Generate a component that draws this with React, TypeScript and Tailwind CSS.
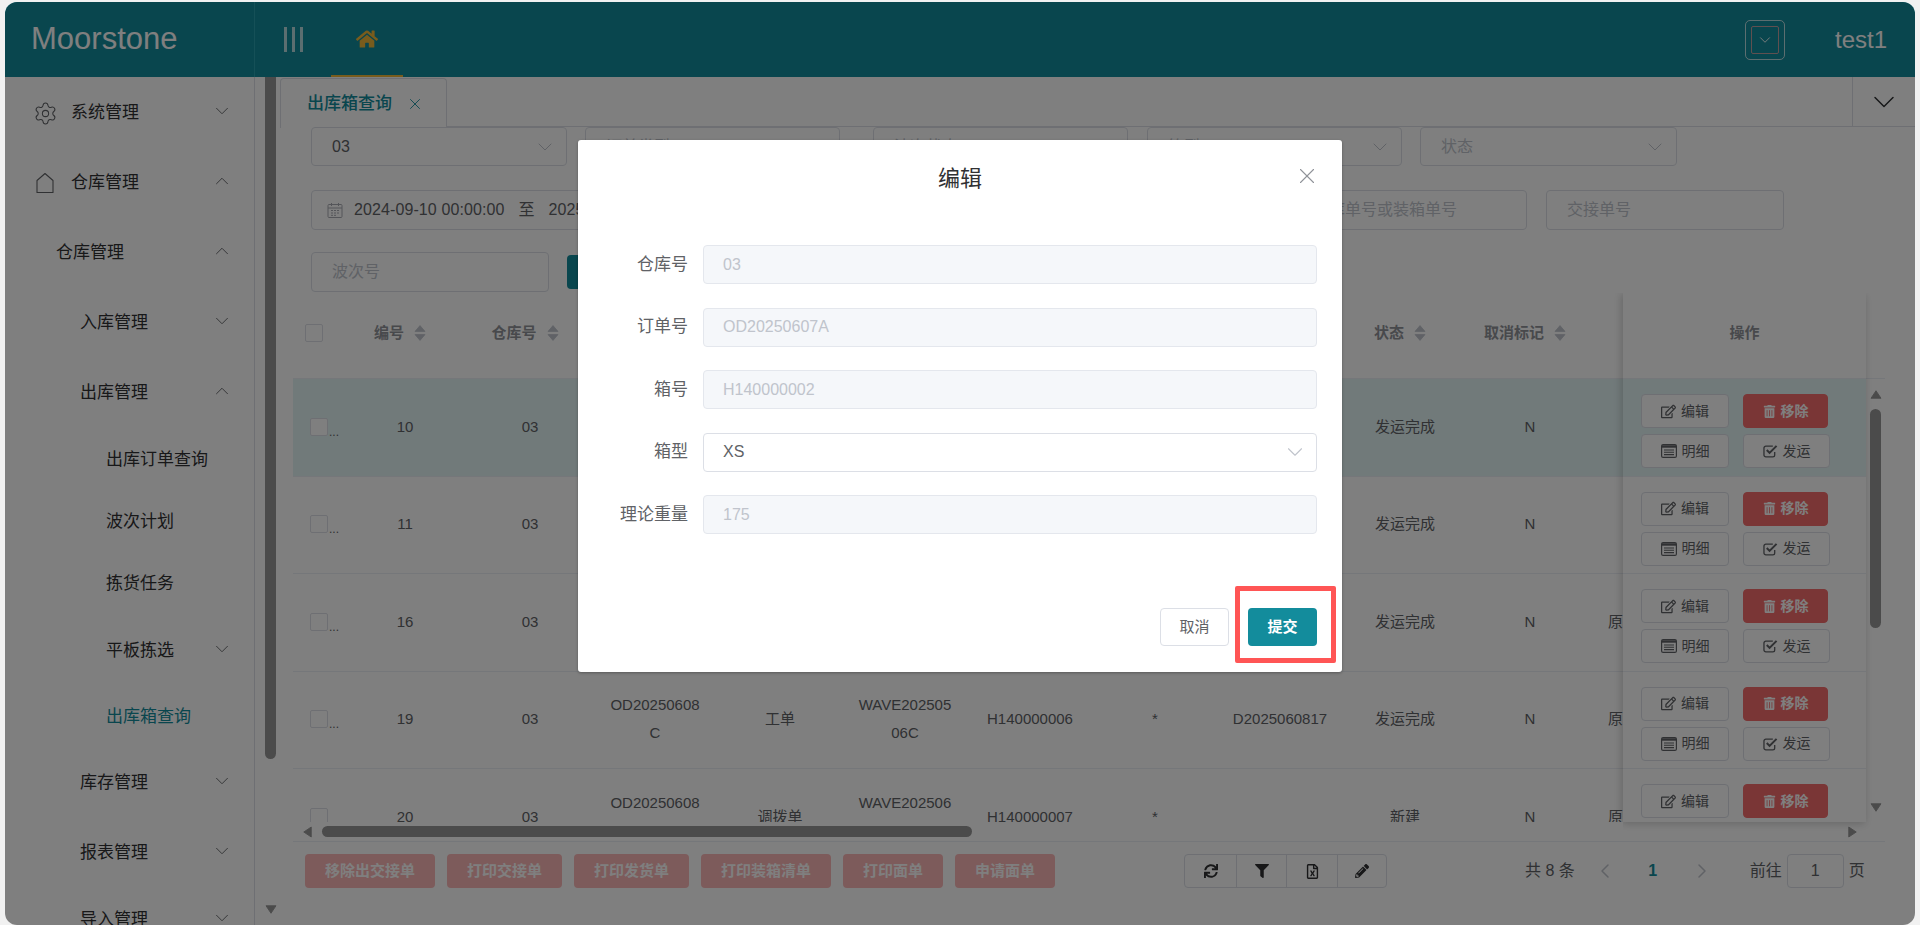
import React from 'react';
import { ChevronDown, ChevronUp, ChevronLeft, ChevronRight, Settings, X } from 'lucide-react';
import { FaHome, FaRegEdit, FaTrashAlt, FaSync, FaFilter, FaRegFileExcel, FaPencilAlt } from 'react-icons/fa';

const menu = [
  { label: '系统管理', h: 'h-[70px]', pl: 'pl-[28px]', icon: 'gear', arrow: 'down' },
  { label: '仓库管理', h: 'h-[70px]', pl: 'pl-[30px]', icon: 'house', arrow: 'up' },
  { label: '仓库管理', h: 'h-[70px]', pl: 'pl-[51px]', arrow: 'up' },
  { label: '入库管理', h: 'h-[70px]', pl: 'pl-[75px]', arrow: 'down' },
  { label: '出库管理', h: 'h-[70px]', pl: 'pl-[75px]', arrow: 'up' },
  { label: '出库订单查询', h: 'h-[63px]', pl: 'pl-[101px]' },
  { label: '波次计划', h: 'h-[62px]', pl: 'pl-[101px]' },
  { label: '拣货任务', h: 'h-[62px]', pl: 'pl-[101px]' },
  { label: '平板拣选', h: 'h-[72px]', pl: 'pl-[101px]', arrow: 'down' },
  { label: '出库箱查询', h: 'h-[60px]', pl: 'pl-[101px]', active: true },
  { label: '库存管理', h: 'h-[72px]', pl: 'pl-[75px]', arrow: 'down' },
  { label: '报表管理', h: 'h-[68px]', pl: 'pl-[75px]', arrow: 'down' },
  { label: '导入管理', h: 'h-[66px]', pl: 'pl-[75px]', arrow: 'down' },
];

const rows = [
  { id: 10, od: ['OD20250607', 'A'], type: '工单', wave: ['WAVE202505', '06A'], box: 'H140000002', status: '发运完成', extra: '' },
  { id: 11, od: ['OD20250607', 'B'], type: '工单', wave: ['WAVE202505', '06B'], box: 'H140000003', status: '发运完成', extra: '' },
  { id: 16, od: ['OD20250608', 'A'], type: '工单', wave: ['WAVE202505', '06C'], box: 'H140000004', status: '发运完成', extra: '原' },
  { id: 19, od: ['OD20250608', 'C'], type: '工单', wave: ['WAVE202505', '06C'], box: 'H140000006', status: '发运完成', extra: '原', no: 'D2025060817' },
  { id: 20, od: ['OD20250608', 'D'], type: '调拨单', wave: ['WAVE202506', '06A'], box: 'H140000007', status: '新建', extra: '原' },
];

const cols = 'grid grid-cols-[52px_120px_130px_120px_130px_120px_130px_120px_130px_120px_130px_1fr]';

const Triangle = ({ dir, className }: { dir: 'up' | 'down' | 'left' | 'right'; className?: string }) => {
  const pts = { up: '6,1 11,11 1,11', down: '1,1 11,1 6,11', left: '11,1 11,11 1,6', right: '1,1 1,11 11,6' }[dir];
  return (
    <svg viewBox="0 0 12 12" preserveAspectRatio="none" className={className}>
      <polygon points={pts} fill="currentColor" stroke="currentColor" strokeLinejoin="round" />
    </svg>
  );
};

const SortIcon = () => (
  <span className="ml-[10px] flex flex-col gap-[2px] text-[#c0c4cc]">
    <Triangle dir="up" className="w-[12px] h-[7px]" />
    <Triangle dir="down" className="w-[12px] h-[7px]" />
  </span>
);

const HeadCell = ({ label }: { label: string }) => (
  <div className="pr-[10px] flex items-center justify-center text-[15px] font-bold text-[#909399]">
    {label}
    <SortIcon />
  </div>
);

const ListIcon = () => (
  <svg viewBox="0 0 16 14" className="w-[16px] h-[14px]" fill="none" stroke="currentColor">
    <rect x="0.600" y="0.600" width="14.800" height="12.800" rx="1.500" strokeWidth="1.200" />
    <path d="M1 2.500h14" strokeWidth="2.400" />
    <path d="M3 6h10M3 8.300h10M3 10.600h10" strokeWidth="1.100" />
  </svg>
);

const CheckIcon = () => (
  <svg viewBox="0 0 16 15" className="w-[15px] h-[14px]" fill="none" stroke="currentColor">
    <path d="M12.500 8.500v3.300a2 2 0 0 1-2 2H3a2 2 0 0 1-2-2V4.300a2 2 0 0 1 2-2h7.500" strokeWidth="1.400" />
    <path d="M4 6.500l3 3 7.500-7.500" strokeWidth="2.200" />
  </svg>
);

const FilterBox = ({ className, children, arrow }: { className: string; children?: React.ReactNode; arrow?: boolean }) => (
  <div className={`shrink-0 flex items-center justify-between pl-[20px] pr-[9px] border border-[#dcdfe6] rounded-[4px] text-[16px] text-[#c0c4cc] ${className}`}>
    <span className="whitespace-nowrap">{children}</span>
    {arrow && <ChevronDown size={24} strokeWidth={1} className="text-[#c0c4cc]" />}
  </div>
);

const RowBtn = ({ w, icon, label, danger }: { w: string; icon: React.ReactNode; label: string; danger?: boolean }) => (
  <div className={`${w} h-[34px] flex items-center justify-center gap-[5px] rounded-[4px] border text-[14px] ${danger ? 'bg-[#f56c6c] border-[#f56c6c] text-white font-bold' : 'bg-white border-[#dcdfe6] text-[#606266]'}`}>
    {icon}
    {label}
  </div>
);

const BottomBtn = ({ w, label }: { w: string; label: string }) => (
  <div className={`${w} h-[34px] flex items-center justify-center rounded-[4px] bg-[#fab6b6] text-white text-[15px] font-bold`}>{label}</div>
);

const Field = ({ label, value, select }: { label: string; value: string; select?: boolean }) => (
  <div className="flex items-center h-[39px]">
    <label className="w-[109px] pr-[15px] text-right text-[17px] text-[#606266] whitespace-nowrap">{label}</label>
    <div className={`w-[614px] h-full flex items-center justify-between pl-[19px] pr-[8px] rounded-[4px] border text-[16px] ${select ? 'bg-white border-[#dcdfe6] text-[#606266]' : 'bg-[#f5f7fa] border-[#e4e7ed] text-[#c0c4cc]'}`}>
      {value}
      {select && <ChevronDown size={26} strokeWidth={1} className="text-[#c0c4cc]" />}
    </div>
  </div>
);

export default function App() {
  return (
    <div className="w-screen h-screen overflow-hidden bg-[#f1f1f1] pt-[2px] pl-[5px] pr-[5px] font-['Liberation_Sans','Noto_Sans_CJK_SC',sans-serif]">
      <div className="relative w-[1910px] h-[923px] bg-white rounded-[12px] overflow-hidden flex flex-col">
        {/* 顶部导航 */}
        <header className="h-[75px] shrink-0 bg-[#138c9c] flex items-center text-white">
          <div className="w-[250px] h-full shrink-0 border-r border-[#2aa0ae] pl-[26px] flex items-center text-[31px]">Moorstone</div>
          <div className="ml-[29px] flex gap-[5px]">
            <span className="w-[3px] h-[25px] bg-white/70"></span>
            <span className="w-[3px] h-[25px] bg-white/70"></span>
            <span className="w-[3px] h-[25px] bg-white/70"></span>
          </div>
          <div className="ml-[28px] w-[72px] h-full flex items-center justify-center border-b-[2px] border-[#f0b93a] text-[#f0b93a]">
            <FaHome size={22} />
          </div>
          <div className="ml-auto mr-[28px] flex items-center">
            <div className="w-[40px] h-[40px] border border-white/70 rounded-[5px] flex items-center justify-center">
              <div className="w-[28px] h-[28px] border border-[#c0a0a0] rounded-[2px] flex items-center justify-center">
                <ChevronDown size={18} strokeWidth={1.2} />
              </div>
            </div>
            <span className="ml-[50px] text-[24px]">test1</span>
          </div>
        </header>

        <div className="flex-1 flex min-h-0">
          {/* 侧边栏 */}
          <aside className="w-[250px] shrink-0 pt-[1px] border-r border-[#dcdfe6] overflow-hidden text-[17px] text-[#303133]">
            {menu.map((m, i) => (
              <div key={i} className={`${m.h} ${m.pl} flex items-center pr-[21px] ${m.active ? 'text-[#138c9c]' : ''}`}>
                {m.icon === 'gear' && <Settings size={25} strokeWidth={1} className="mr-[13px] text-[#606266]" />}
                {m.icon === 'house' && (
                  <svg viewBox="0 0 20 22" className="w-[20px] h-[22px] mr-[16px] text-[#606266]" fill="none" stroke="currentColor" strokeWidth="1.100">
                    <path d="M2 20.500h16V8.500L10 1.500 2 8.500z" strokeLinejoin="round" />
                  </svg>
                )}
                <span className="whitespace-nowrap">{m.label}</span>
                {m.arrow === 'down' && <ChevronDown size={22} strokeWidth={1} className="ml-auto -mt-[4px] text-[#606266]" />}
                {m.arrow === 'up' && <ChevronUp size={22} strokeWidth={1} className="ml-auto -mt-[4px] text-[#606266]" />}
              </div>
            ))}
          </aside>

          {/* 侧边滚动条 */}
          <div className="w-[25px] shrink-0 pl-[10px] flex flex-col">
            <div className="w-[11px] h-[682px] rounded-b-full bg-[#969696]"></div>
            <Triangle dir="down" className="mt-[146px] w-[12px] h-[9px] text-[#969696]" />
          </div>

          {/* 主内容 */}
          <main className="flex-1 min-w-0 flex flex-col">
            <div className="h-[50px] shrink-0 flex border-b border-[#dcdfe6]">
              <div className="mt-[1px] w-[167px] h-[50px] pl-[26px] flex items-center bg-white border border-b-0 border-[#dcdfe6] rounded-t-[4px] text-[17px] text-[#138c9c] font-medium">
                出库箱查询
                <X size={18} strokeWidth={1.2} className="ml-[14px]" />
              </div>
              <div className="ml-auto w-[63px] border-l border-[#dcdfe6] flex items-center justify-center">
                <ChevronDown size={36} strokeWidth={1} className="text-[#303133]" />
              </div>
            </div>

            <div className="pl-[31px] flex h-[39px]">
              <FilterBox className="w-[256px] !text-[#606266]" arrow>03</FilterBox>
              <FilterBox className="ml-[18px] w-[255px]" arrow>订单类型</FilterBox>
              <FilterBox className="ml-[33px] w-[255px]" arrow>波次状态</FilterBox>
              <FilterBox className="ml-[19px] w-[255px]" arrow>箱型</FilterBox>
              <FilterBox className="ml-[18px] w-[257px]" arrow>状态</FilterBox>
            </div>
            <div className="mt-[24px] pl-[31px] flex h-[40px]">
              <div className="w-[640px] shrink-0 flex items-center pl-[15px] border border-[#dcdfe6] rounded-[4px] text-[16px] tracking-[0.1px] text-[#606266]">
                <svg viewBox="0 0 16 16" className="w-[16px] h-[16px] mr-[11px] text-[#a8abb2]" fill="none" stroke="currentColor" strokeWidth="1">
                  <rect x="1" y="2.500" width="14" height="13" rx="1" />
                  <path d="M1 6h14M4.500 1v3M11.500 1v3M4 8.500h2M7 8.500h2M10 8.500h2M4 11h2M7 11h2M10 11h2M4 13.300h2M7 13.300h2" />
                </svg>
                2024-09-10 00:00:00
                <span className="mx-[14px]">至</span>
                2025-06-30 23:59:59
              </div>
              <FilterBox className="ml-[341px] w-[235px]">出库单号或装箱单号</FilterBox>
              <FilterBox className="ml-[19px] w-[238px]">交接单号</FilterBox>
            </div>
            <div className="mt-[22px] pl-[31px] flex h-[40px] items-center">
              <FilterBox className="w-[238px] h-full">波次号</FilterBox>
              <div className="ml-[18px] w-[78px] h-[34px] rounded-[4px] bg-[#138c9c] text-white text-[14px] flex items-center justify-center">查询</div>
            </div>

            {/* 表格 */}
            <section className="relative mt-[1px] ml-[13px] w-[1592px] h-[549px] shrink-0 border-b border-[#ebeef5] overflow-hidden">
              <div className={`${cols} h-[86px] pb-[5px] border-b border-[#ebeef5]`}>
                <div className="flex items-center pl-[12px]">
                  <span className="w-[18px] h-[18px] border border-[#dcdfe6] rounded-[2px] bg-white"></span>
                </div>
                {['编号', '仓库号', '订单号', '订单类型', '波次号', '箱号', '箱型', '交接单号', '状态', '取消标记'].map(h => (
                  <HeadCell key={h} label={h} />
                ))}
                <div></div>
              </div>
              {rows.map((r, i) => (
                <div key={r.id} className={`${cols} w-[1573px] h-[97.5px] pb-[1px] border-b border-[#ebeef5] text-[15px] leading-[28px] text-[#606266] text-center ${i === 0 ? 'bg-[#e3f4f5]' : ''}`}>
                  <div className="flex items-center pl-[17px]">
                    <span className="w-[18px] h-[18px] shrink-0 border border-[#dcdfe6] rounded-[2px] bg-white"></span>
                    <span className="text-[12px] leading-none mt-[10px] ml-[1px]">...</span>
                  </div>
                  <div className="flex items-center justify-center">{r.id}</div>
                  <div className="flex items-center justify-center">03</div>
                  <div className="flex flex-col items-center justify-center">
                    <span>{r.od[0]}</span>
                    <span>{r.od[1]}</span>
                  </div>
                  <div className="flex items-center justify-center">{r.type}</div>
                  <div className="flex flex-col items-center justify-center">
                    <span>{r.wave[0]}</span>
                    <span>{r.wave[1]}</span>
                  </div>
                  <div className="flex items-center justify-center">{r.box}</div>
                  <div className="flex items-center justify-center">*</div>
                  <div className="flex items-center justify-center">{r.no}</div>
                  <div className="flex items-center justify-center">{r.status}</div>
                  <div className="flex items-center justify-center">N</div>
                  <div className="flex items-center pl-[13px]">{r.extra}</div>
                </div>
              ))}

              {/* 固定操作列 */}
              <div className="absolute left-[1330px] top-0 w-[243px] h-[529px] bg-white overflow-hidden shadow-[-3px_0_8px_rgba(0,0,0,0.1),0_3px_8px_rgba(0,0,0,0.1)]">
                <div className="h-[86px] pb-[5px] flex items-center justify-center border-b border-[#ebeef5] text-[15px] font-bold text-[#909399]">操作</div>
                {rows.map((r, i) => (
                  <div key={r.id} className={`h-[97.5px] pl-[18px] pt-[15px] border-b border-[#ebeef5] ${i === 0 ? 'bg-[#e3f4f5]' : ''}`}>
                    <div className="flex gap-[14px]">
                      <RowBtn w="w-[88px]" icon={<FaRegEdit size={15} />} label="编辑" />
                      <RowBtn w="w-[85px]" icon={<FaTrashAlt size={13} />} label="移除" danger />
                    </div>
                    <div className="mt-[6px] flex gap-[14px]">
                      <RowBtn w="w-[88px]" icon={<ListIcon />} label="明细" />
                      <RowBtn w="w-[87px]" icon={<CheckIcon />} label="发运" />
                    </div>
                  </div>
                ))}
              </div>

              {/* 竖向滚动条 */}
              <div className="absolute right-[4px] top-[97px] w-[11px] flex flex-col items-center text-[#969696]">
                <Triangle dir="up" className="w-[12px] h-[9px]" />
                <div className="mt-[10px] w-[11px] h-[219px] rounded-full bg-[#969696]"></div>
                <Triangle dir="down" className="mt-[175px] w-[12px] h-[9px]" />
              </div>

              {/* 横向滚动条 */}
              <div className="absolute left-0 bottom-0 w-[1330px] h-[19px] bg-white flex items-center text-[#969696]">
                <Triangle dir="left" className="ml-[10px] w-[9px] h-[12px]" />
                <div className="ml-[10px] w-[650px] h-[11px] rounded-full bg-[#969696]"></div>
              </div>
              <Triangle dir="right" className="absolute left-[1555px] bottom-[3px] w-[9px] h-[12px] text-[#969696]" />
            </section>

            {/* 底部操作 */}
            <div className="mt-[12px] ml-[25px] flex items-center">
              <BottomBtn w="w-[130px]" label="移除出交接单" />
              <BottomBtn w="ml-[12px] w-[115px]" label="打印交接单" />
              <BottomBtn w="ml-[12px] w-[115px]" label="打印发货单" />
              <BottomBtn w="ml-[12px] w-[130px]" label="打印装箱清单" />
              <BottomBtn w="ml-[12px] w-[100px]" label="打印面单" />
              <BottomBtn w="ml-[12px] w-[100px]" label="申请面单" />
              <div className="ml-[129px] w-[203px] h-[34px] flex border border-[#dcdfe6] rounded-[4px] text-[#303133]">
                <span className="w-[52px] flex items-center justify-center border-r border-[#dcdfe6]"><FaSync size={14} /></span>
                <span className="w-[50px] flex items-center justify-center border-r border-[#dcdfe6]"><FaFilter size={14} /></span>
                <span className="w-[51px] flex items-center justify-center border-r border-[#dcdfe6]"><FaRegFileExcel size={15} /></span>
                <span className="flex-1 flex items-center justify-center"><FaPencilAlt size={14} /></span>
              </div>
              <div className="ml-[138px] flex items-center text-[16px] text-[#606266]">
                <span className="whitespace-nowrap">共 8 条</span>
                <ChevronLeft size={24} strokeWidth={1.5} className="ml-[18px] text-[#c0c4cc]" />
                <span className="ml-[31px] w-[10px] text-center font-bold text-[#138c9c]">1</span>
                <ChevronRight size={24} strokeWidth={1.5} className="ml-[32px] text-[#c0c4cc]" />
                <span className="ml-[36px] whitespace-nowrap">前往</span>
                <span className="ml-[5px] w-[57px] h-[34px] flex items-center justify-center bg-white border border-[#dcdfe6] rounded-[4px]">1</span>
                <span className="ml-[5px]">页</span>
              </div>
            </div>
          </main>
        </div>

        {/* 遮罩和弹窗 */}
        <div className="absolute inset-0 bg-black/50 flex justify-center items-start">
          <div className="relative mt-[138px] w-[764px] h-[532px] bg-white rounded-[3px] shadow-[0_1px_3px_rgba(0,0,0,0.3)] flex flex-col">
            <div className="h-[76px] pt-[24px] text-center text-[22px] leading-[30px] text-[#303133]">编辑</div>
            <X size={26} strokeWidth={1} className="absolute right-[22px] top-[23px] text-[#909399]" />
            <div className="mt-[29px] pl-[16px] flex flex-col gap-[23.500px]">
              <Field label="仓库号" value="03" />
              <Field label="订单号" value="OD20250607A" />
              <Field label="箱号" value="H140000002" />
              <Field label="箱型" value="XS" select />
              <Field label="理论重量" value="175" />
            </div>
            <div className="mt-auto mb-[26px] pr-[25px] flex justify-end gap-[19px]">
              <div className="w-[69px] h-[38px] flex items-center justify-center border border-[#dcdfe6] rounded-[4px] text-[15px] text-[#606266]">取消</div>
              <div className="w-[69px] h-[38px] flex items-center justify-center rounded-[4px] bg-[#138c9c] text-[15px] font-bold text-white">提交</div>
            </div>
            {/* 红色标注框 */}
            <div className="absolute left-[657px] top-[446px] w-[101px] h-[77px] border-[5px] border-[#ff5555] rounded-[2px]"></div>
          </div>
        </div>
      </div>
    </div>
  );
}
